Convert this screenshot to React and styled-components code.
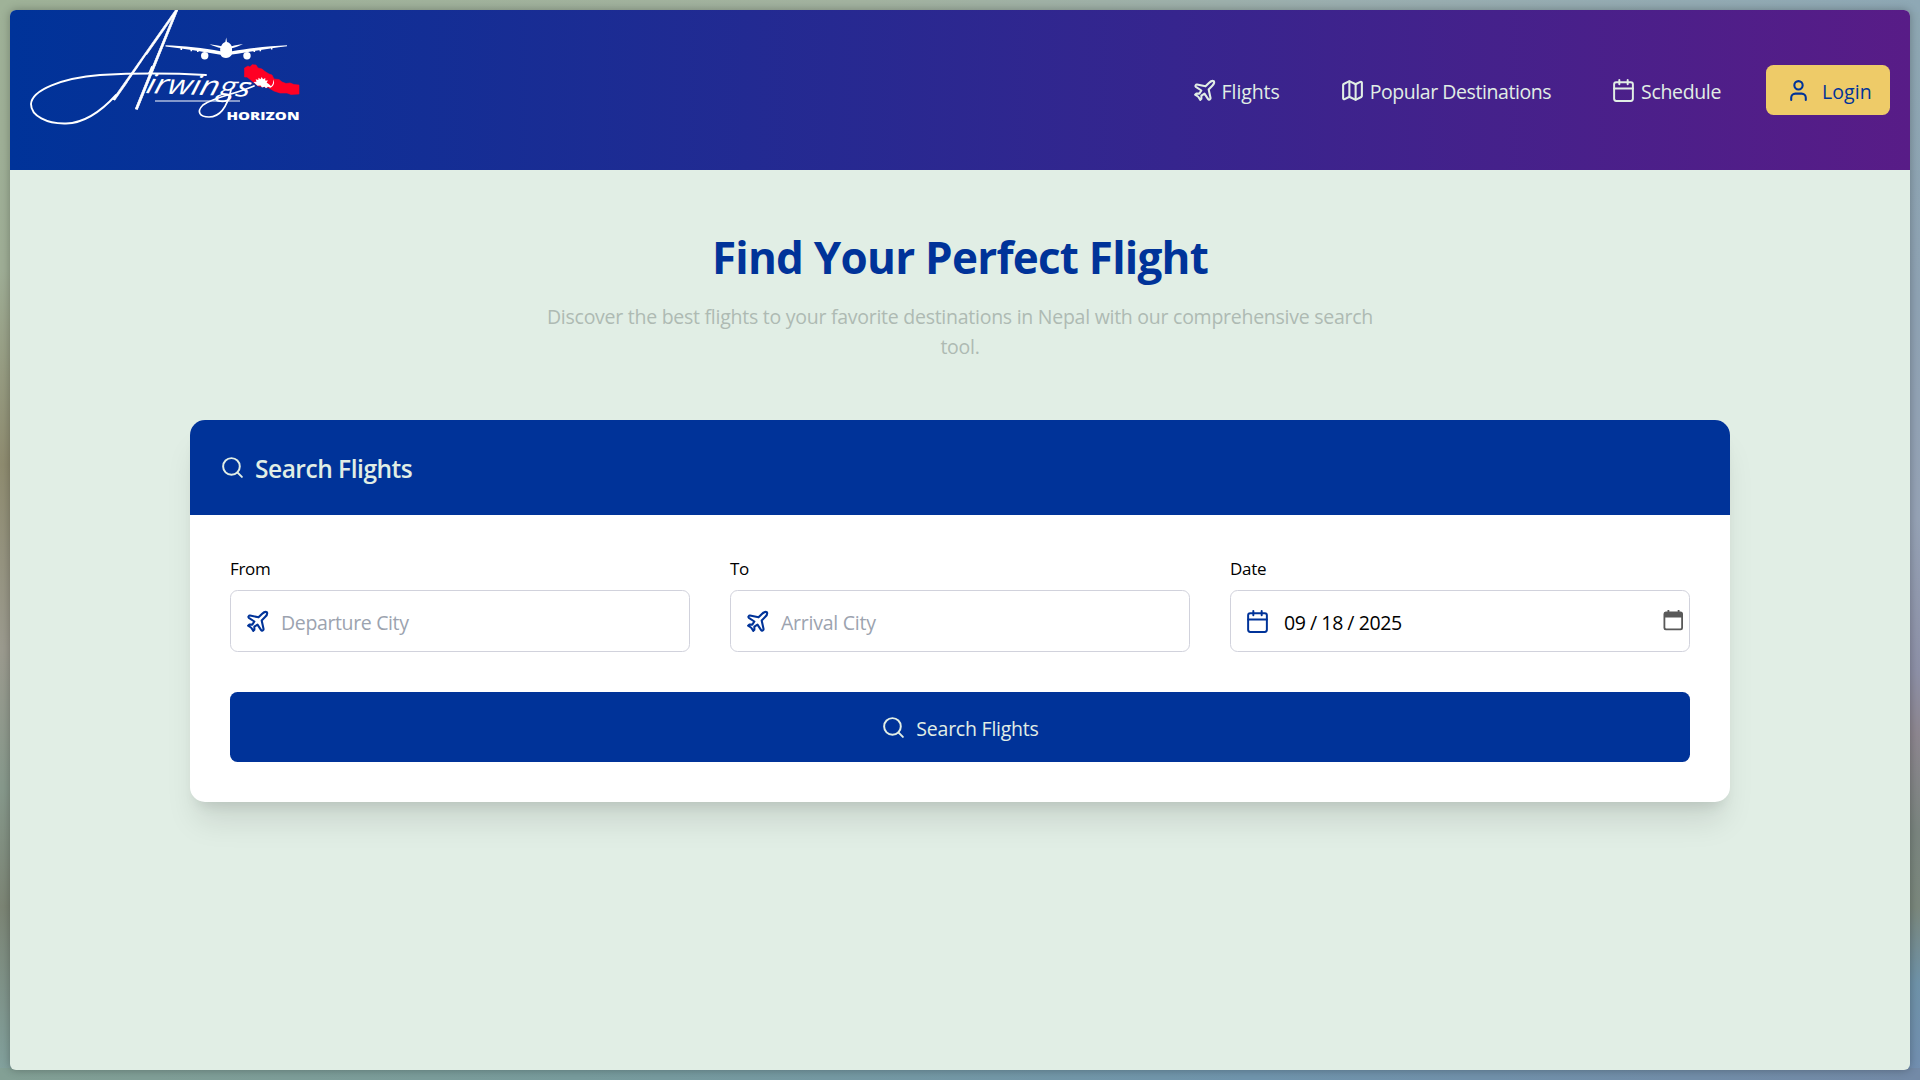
import React from "react";
import styled, { createGlobalStyle } from "styled-components";
import { Plane, Map as MapIcon, Calendar, User, Search } from "lucide-react";

const blue = "#003399";
const mint = "#e1eee5";

const GlobalStyle = createGlobalStyle`
  * { box-sizing: border-box; }
  body {
    margin: 0;
    font-family: "Open Sans", "Noto Sans", sans-serif;
    background:
      linear-gradient(90deg, #9fb298 0%, #a3b3a0 45%, #9bafb0 70%, #8ea8b5 100%) top / 100% 12px no-repeat,
      linear-gradient(90deg, #83a095 0%, #789c9d 30%, #7095ad 65%, #738aa7 100%) bottom / 100% 12px no-repeat,
      linear-gradient(180deg, #9fb298 0%, #9fae96 25%, #8f8c70 43%, #9c9b8f 60%, #87998c 73%, #7c8575 84%, #83a3a0 100%) left / 50% 100% no-repeat,
      linear-gradient(180deg, #8ea8b3 0%, #8fa3b4 28%, #96a3b6 48%, #8e91a8 62%, #8e8790 68%, #7a857f 77%, #7b887d 84%, #6f93a9 91%, #738fb2 100%) right / 50% 100% no-repeat;
  }
`;

const Desktop = styled.div`
  display: flex;
  width: 100vw;
  height: 100vh;
  padding: 10px;
`;

const Page = styled.div`
  display: flex;
  flex-direction: column;
  flex: 1;
  overflow: hidden;
  border-radius: 6px;
  background: ${mint};
  box-shadow: 0 0 10px rgba(0, 0, 0, 0.28);
`;

const Header = styled.header`
  display: flex;
  align-items: center;
  justify-content: space-between;
  height: 160px;
  padding: 0 20px;
  background: linear-gradient(to right, #003399, #581c87);
`;

const LogoArt = styled.svg`
  display: block;
  width: 280px;
  height: 160px;
`;

const Nav = styled.nav`
  display: flex;
  align-items: center;
  gap: 30px;
`;

const NavLink = styled.a`
  display: flex;
  align-items: center;
  gap: 5px;
  padding: 0 15px;
  color: ${mint};
`;

const Label = styled.span`
  padding-top: ${(p) => p.$drop ?? 4}px;
  font-size: 19.5px;
  line-height: 30px;
  letter-spacing: ${(p) => p.$track ?? 0}px;
  white-space: nowrap;
`;

const LoginButton = styled.button`
  display: flex;
  align-items: center;
  gap: 11px;
  width: 124px;
  height: 50px;
  padding: 0 0 0 20px;
  border: 0;
  border-radius: 7.5px;
  background: #eecb68;
  color: ${blue};
  font-family: inherit;
`;

const Main = styled.main`
  display: flex;
  flex-direction: column;
  align-items: center;
  padding-top: 62px;
`;

const Title = styled.h1`
  margin: 0;
  color: ${blue};
  font-size: 44px;
  font-weight: 700;
  line-height: 50px;
  letter-spacing: -0.76px;
`;

const Subtitle = styled.p`
  width: 840px;
  margin: 20px 0 58px;
  color: #aebab3;
  font-size: 19.5px;
  line-height: 30px;
  letter-spacing: -0.26px;
  text-align: center;
`;

const Card = styled.section`
  width: 1540px;
  overflow: hidden;
  border-radius: 15px;
  background: #fff;
  box-shadow: 0 25px 31px -6px rgba(0, 0, 0, 0.1), 0 10px 12.5px -7.5px rgba(0, 0, 0, 0.1);
`;

const CardHeader = styled.div`
  display: flex;
  align-items: center;
  gap: 10px;
  height: 95px;
  padding: 0 30px;
  background: ${blue};
  color: ${mint};
`;

const CardTitle = styled.h2`
  margin: 0;
  padding-top: 3px;
  font-size: 24.5px;
  font-weight: 600;
  line-height: 36px;
  letter-spacing: -0.48px;
`;

const Form = styled.div`
  display: flex;
  flex-direction: column;
  gap: 40px;
  padding: 40px;
`;

const Fields = styled.div`
  display: grid;
  grid-template-columns: repeat(3, 1fr);
  gap: 40px;
`;

const Field = styled.div`
  display: flex;
  flex-direction: column;
  gap: 10px;
`;

const FieldLabel = styled.label`
  height: 25px;
  padding-top: 1px;
  color: #000;
  font-size: 17px;
  line-height: 25px;
  letter-spacing: -0.3px;
`;

const InputBox = styled.div`
  display: flex;
  align-items: center;
  gap: ${(p) => p.$gap || 11}px;
  height: 62px;
  padding: 0 5px 0 14px;
  border: 1px solid #d1d2dc;
  border-radius: 7.5px;
  color: ${(p) => (p.$filled ? "#000" : "#9ca3af")};

  & > svg:first-child {
    color: ${blue};
  }
`;

const DateParts = styled.div`
  display: flex;
  flex: 1;
  gap: 4.3px;
`;

const PickerArt = styled.svg`
  width: 21px;
  height: 21px;
  margin-bottom: 2px;
`;

const SearchButton = styled.button`
  display: flex;
  align-items: center;
  justify-content: center;
  gap: 10px;
  height: 70px;
  border: 0;
  border-radius: 7.5px;
  background: ${blue};
  color: ${mint};
  font-family: inherit;
`;

function Logo() {
  return (
    <LogoArt viewBox="30 10 280 160" aria-label="Airwings Horizon">
      <clipPath id="open-legs">
        <path d="M-20 20 H90 V-110 H-20 Z M11 -14 L18.500 -36 L38.500 -36 L46 -14 Z" clipRule="evenodd" />
      </clipPath>
      {/* flourish around the wordmark */}
      <g fill="none" stroke="#fff" strokeLinecap="round">
        <path d="M206 75 C170 73 135 73 100 75 C62 78 32 90 31 104 C31 116 47 124 66 123.5 C88 123 106 106 116 95" strokeWidth="1.9" />
        <path d="M155 101 H240" strokeWidth="1.2" strokeLinecap="butt" />
        <path d="M231 90 C228 103 222 117 209 117 C200 117 196 112 203 105 C214 97 236 94 254 86" strokeWidth="1.7" />
      </g>
      <text transform="matrix(0.41 0.17 -0.718 1.32 113 99)" clipPath="url(#open-legs)" fill="#fff" stroke="#fff" strokeWidth="1" fontFamily="Open Sans" fontWeight="300" fontSize="100">A</text>
      <text transform="translate(145 93) rotate(2) skewX(-12)" fill="#fff" fontFamily="Open Sans" fontStyle="italic" fontWeight="500" fontSize="27" textLength="104" lengthAdjust="spacingAndGlyphs">irwings</text>
      <text x="226.500" y="119.700" fill="#fff" fontFamily="Open Sans" fontWeight="800" fontSize="11" textLength="73" lengthAdjust="spacingAndGlyphs">HORIZON</text>
      {/* airliner, seen head on */}
      <g fill="#fff">
        <path d="M165.500 45.300 C183 46 204 48 220.500 51.300 L220.500 48 C218 47.500 213 46 209.500 44.300 C214 44.800 219 45.600 221.300 46.200 C222 43.500 224 42.300 225.300 42 L226.200 37.500 L227 42 C229 42.500 231 44 231.700 46.200 C235 45.300 239 44.500 243 44 C240 45.700 235 47.300 232 48.200 L232 51.300 C248 48 270 46 287 45.200 V46.200 C268 48.500 248 52 232 54.500 C230.500 57 228 58 226 58 C223.500 58 221.500 57 220.500 54.700 C203 51.500 184 48.500 165.500 46.400 Z" />
        <circle cx="204.700" cy="55.700" r="3.700" />
        <circle cx="247" cy="55.700" r="3.700" />
        <circle cx="226" cy="49.500" r="5.700" />
        <path d="M180.500 48h1.600v2h-1.600zM190.500 49h1.600v2.300h-1.600zM197 50h1.600v2h-1.600zM253.500 50h1.600v2h-1.600zM259.500 49h1.600v2.300h-1.600zM271 48h1.400v1.600H271z" />
      </g>
      {/* map of Nepal with sun and moon */}
      <path d="M244.500 68 L248 66 L250 67 L252 64.700 L256 65 L258 68 L262 69 L265 71.500 L269 74 L272 75 L274 79 L279 79.500 L282 82 L286 83.500 L290 83 L294 84.500 L299 85 V94 L291 94.500 L287 93 L280 93 L274 91 L268 87.500 L258 86 L252 81 L247 77 L244.500 77 Z" fill="#ff0024" stroke="#ff0024" strokeWidth="0.600" />
      <path d="M253.500 82 L256.500 81.700 L255.700 79.300 L258.300 80 L258.500 77.700 L260.500 79.300 L261.700 77 L263 79.300 L265.300 78 L265.200 80.500 L268 80.500 L266.600 82.600 L269 84.300 L271 86.300 C273 84.500 273.300 82 273.500 79.500 C275 83 273.500 86.300 270.500 87.800 L268 86.700 L266 88.300 L264.500 86.700 L262 87.400 L260.500 85.500 L257.500 85.700 Z" fill="#fff" />
    </LogoArt>
  );
}

function PickerIcon() {
  return (
    <PickerArt viewBox="0 0 21 21">
      <path d="M3.300 1.500H4.500V0H6.300V1.500H14.700V0H16.500V1.500H17.500A2.500 2.500 0 0 1 20 4V18A2.300 2.300 0 0 1 17.700 20.300H2.800A2.300 2.300 0 0 1 .5 18V4A2.500 2.500 0 0 1 3.300 1.500ZM2.300 7.500V17.500A1 1 0 0 0 3.300 18.500H17.200A1 1 0 0 0 18.200 17.500V7.500Z" fill="#595959" fillRule="evenodd" />
    </PickerArt>
  );
}

export default function App() {
  return (
    <Desktop>
      <GlobalStyle />
      <Page>
        <Header>
          <Logo />
          <Nav>
            <NavLink>
              <Plane size={25} />
              <Label $track={-0.1}>Flights</Label>
            </NavLink>
            <NavLink>
              <MapIcon size={25} />
              <Label $track={-0.43}>Popular Destinations</Label>
            </NavLink>
            <NavLink>
              <Calendar size={25} strokeWidth={1.9} />
              <Label $track={-0.35}>Schedule</Label>
            </NavLink>
            <LoginButton>
              <User size={25} />
              <Label $track={0.1}>Login</Label>
            </LoginButton>
          </Nav>
        </Header>
        <Main>
          <Title>Find Your Perfect Flight</Title>
          <Subtitle>
            Discover the best flights to your favorite destinations in Nepal with our comprehensive search tool.
          </Subtitle>
          <Card>
            <CardHeader>
              <Search size={25} strokeWidth={1.9} />
              <CardTitle>Search Flights</CardTitle>
            </CardHeader>
            <Form>
              <Fields>
                <Field>
                  <FieldLabel>From</FieldLabel>
                  <InputBox>
                    <Plane size={25} />
                    <Label $track={-0.36} $drop={3}>Departure City</Label>
                  </InputBox>
                </Field>
                <Field>
                  <FieldLabel>To</FieldLabel>
                  <InputBox>
                    <Plane size={25} />
                    <Label $track={-0.25} $drop={3}>Arrival City</Label>
                  </InputBox>
                </Field>
                <Field>
                  <FieldLabel>Date</FieldLabel>
                  <InputBox $filled $gap={14}>
                    <Calendar size={25} strokeWidth={1.9} />
                    <DateParts>
                      <Label $track={-0.35} $drop={3}>09</Label>
                      <Label $drop={3}>/</Label>
                      <Label $track={-0.35} $drop={3}>18</Label>
                      <Label $drop={3}>/</Label>
                      <Label $track={-0.35} $drop={3}>2025</Label>
                    </DateParts>
                    <PickerIcon />
                  </InputBox>
                </Field>
              </Fields>
              <SearchButton>
                <Search size={25} strokeWidth={1.9} />
                <Label $track={-0.23} $drop={3}>Search Flights</Label>
              </SearchButton>
            </Form>
          </Card>
        </Main>
      </Page>
    </Desktop>
  );
}
